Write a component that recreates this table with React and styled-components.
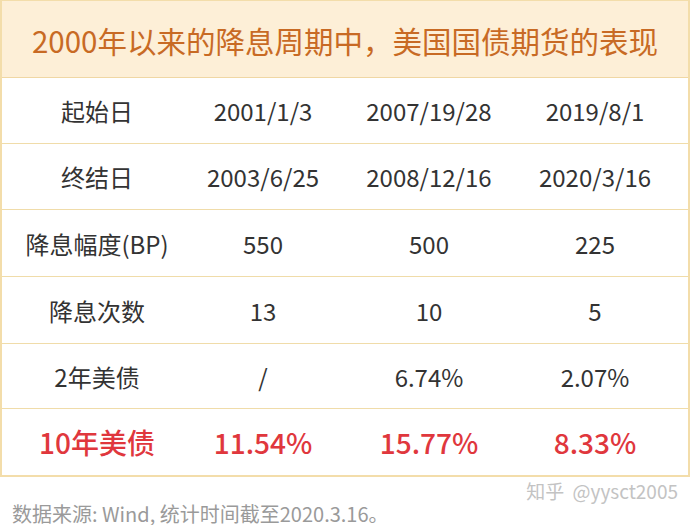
import React from "react";
import styled, { createGlobalStyle } from "styled-components";

const Global = createGlobalStyle`
  html, body { margin: 0; padding: 0; background: #ffffff; }
  body { font-family: "Noto Sans CJK SC", "Noto Sans", sans-serif; }
`;

const Page = styled.div`
  width: 692px;
  height: 525px;
  overflow: hidden;
  background: #ffffff;
  display: flex;
  flex-direction: column;
`;

const Table = styled.div`
  width: 690px;
  box-sizing: border-box;
  border: 2px solid #f3ddaa;
  border-top-width: 1px;
  display: flex;
  flex-direction: column;
`;

const Header = styled.div`
  height: 77px;
  box-sizing: border-box;
  background: #fdefd7;
  border-bottom: 1px solid #f0d7a4;
  display: flex;
  align-items: center;
  justify-content: center;
  padding-top: 2px;
  font-size: 29.5px;
  color: #c86a24;
`;

const Row = styled.div`
  display: grid;
  grid-template-columns: repeat(4, 166px);
  padding-left: 12px;
  box-sizing: border-box;
  height: ${(p) => p.$h}px;
  align-items: center;
  border-bottom: ${(p) => (p.$last ? "none" : "1px solid #f0dca9")};
`;

const Cell = styled.div`
  text-align: center;
  font-size: ${(p) => (p.$accent ? 28 : 24)}px;
  font-weight: ${(p) => (p.$accent ? 500 : 400)};
  color: ${(p) => (p.$accent ? "#e0373d" : "#333333")};
  white-space: nowrap;
`;

const Footer = styled.div`
  display: flex;
  flex-direction: column;
`;

const Watermark = styled.div`
  align-self: flex-end;
  margin-right: 14px;
  margin-top: 3px;
  font-size: 19px;
  line-height: 22px;
  color: #c3c3c3;
  word-spacing: 4px;
`;

const Source = styled.div`
  padding-left: 12px;
  font-size: 20px;
  line-height: 20px;
  margin-top: 2px;
  color: #9a9a9a;
  white-space: nowrap;
`;

const rows = [
  { h: 66, cells: ["起始日", "2001/1/3", "2007/19/28", "2019/8/1"] },
  { h: 66, cells: ["终结日", "2003/6/25", "2008/12/16", "2020/3/16"] },
  { h: 67, cells: ["降息幅度(BP)", "550", "500", "225"] },
  { h: 67, cells: ["降息次数", "13", "10", "5"] },
  { h: 65, cells: ["2年美债", "/", "6.74%", "2.07%"] },
];

const last = ["10年美债", "11.54%", "15.77%", "8.33%"];

export default function App() {
  return (
    <Page>
      <Global />
      <Table>
        <Header>2000年以来的降息周期中，美国国债期货的表现</Header>
        {rows.map((r, i) => (
          <Row key={i} $h={r.h}>
            {r.cells.map((c, j) => (
              <Cell key={j}>{c}</Cell>
            ))}
          </Row>
        ))}
        <Row $last $h={66}>
          {last.map((c, j) => (
            <Cell key={j} $accent>
              {c}
            </Cell>
          ))}
        </Row>
      </Table>
      <Footer>
        <Watermark>知乎 @yysct2005</Watermark>
        <Source>数据来源: Wind, 统计时间截至2020.3.16。</Source>
      </Footer>
    </Page>
  );
}
